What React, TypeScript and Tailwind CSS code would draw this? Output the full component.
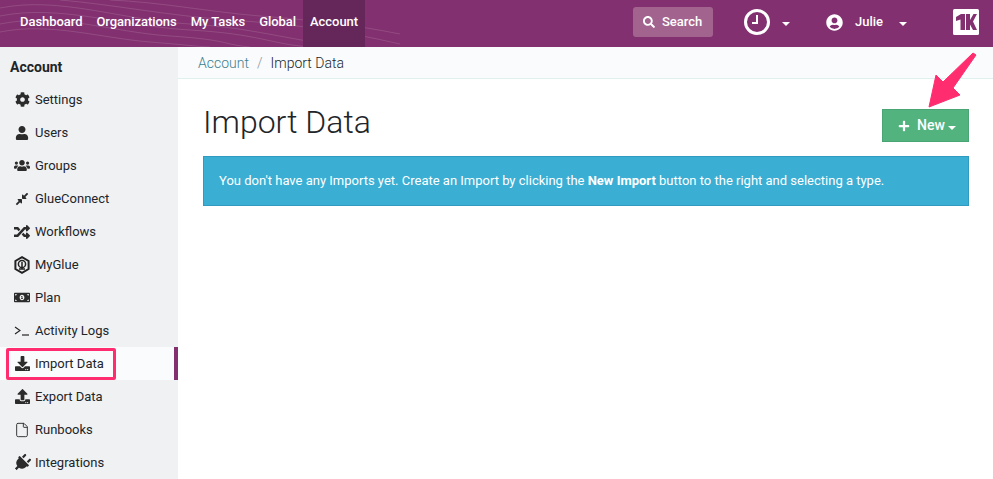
import type { ReactNode } from "react";
import {
  FaCog,
  FaUser,
  FaUsers,
  FaCompressAlt,
  FaRandom,
  FaMoneyBillAlt,
  FaDownload,
  FaUpload,
  FaPlug,
  FaSearch,
  FaPlus,
  FaUserCircle,
} from "react-icons/fa";
import { File } from "lucide-react";

function MyGlueIcon() {
  return (
    <svg viewBox="0 0 16 18" className="w-[16px] h-[18px]">
      <path d="M8 1.2 14.6 5v8L8 16.8 1.4 13V5z" fill="none" stroke="#222" strokeWidth="2" />
      <circle cx="8" cy="8" r="3.6" fill="none" stroke="#222" strokeWidth="1.5" />
      <path d="M8 6v7M5 13h6" stroke="#222" strokeWidth="1.5" />
    </svg>
  );
}

function TerminalIcon() {
  return (
    <svg viewBox="0 0 16 10" className="w-[16px] h-[10px]">
      <path d="M1 1l5 3.5L1 8" fill="none" stroke="#222" strokeWidth="1.1" />
      <path d="M8 9h7" stroke="#222" strokeWidth="1.2" />
    </svg>
  );
}

function Caret() {
  return <span className="inline-block w-0 h-0 border-x-[4px] border-x-transparent border-t-[4px] border-t-current" />;
}

const sideItems: { label: string; icon: ReactNode; active?: boolean }[] = [
  { label: "Settings", icon: <FaCog size={15} /> },
  { label: "Users", icon: <FaUser size={14} /> },
  { label: "Groups", icon: <FaUsers size={19} /> },
  { label: "GlueConnect", icon: <FaCompressAlt size={14} /> },
  { label: "Workflows", icon: <FaRandom size={16} /> },
  { label: "MyGlue", icon: <MyGlueIcon /> },
  { label: "Plan", icon: <FaMoneyBillAlt size={17} /> },
  { label: "Activity Logs", icon: <TerminalIcon /> },
  { label: "Import Data", icon: <FaDownload size={15} />, active: true },
  { label: "Export Data", icon: <FaUpload size={15} /> },
  { label: "Runbooks", icon: <File size={16} strokeWidth={1.4} /> },
  { label: "Integrations", icon: <FaPlug size={18} className="rotate-45" /> },
];

const navItems = ["Dashboard", "Organizations", "My Tasks", "Global", "Account"];

export default function App() {
  return (
    <div className="h-[479px] w-[993px] overflow-hidden flex flex-col bg-white text-[#212529] font-['Roboto',sans-serif]">
      {/* Top bar */}
      <header className="relative h-[47px] shrink-0 bg-[#82306f] flex items-center text-white text-[13px] font-medium">
        <svg viewBox="0 0 400 47" className="absolute left-0 top-0 w-[400px] h-[47px]" fill="none" stroke="#fff" strokeOpacity="0.13">
          <path d="M0 8C60 -4 120 20 190 24S300 44 360 47" />
          <path d="M0 16C60 4 120 26 190 30S270 44 310 47" />
          <path d="M0 24C60 12 110 32 170 36S220 44 250 47" />
          <path d="M0 32C50 22 100 38 150 42S190 46 210 47" />
          <path d="M60 0C110 4 170 16 230 20S340 30 400 44" />
          <path d="M110 0C160 2 210 12 260 16S350 24 400 34" />
        </svg>
        <nav className="relative flex h-full pl-[13px] tracking-[-0.05px]">
          {navItems.map((item) => (
            <a
              key={item}
              className={`flex items-center px-[7px] pb-[4px] ${item === "Account" ? "bg-[#65275a]" : ""}`}
            >
              {item}
            </a>
          ))}
        </nav>
        <div className="relative ml-auto flex items-center h-full pb-[3px]">
          <button className="flex items-center gap-[7px] w-[80px] h-[30px] pl-[10px] rounded-[3px] bg-[#a2648f] text-[13px] font-medium text-white">
            <FaSearch size={12} />
            Search
          </button>
          <span className="ml-[31px] w-[26px] h-[26px] rounded-full border-[3px] border-white relative">
            <span className="absolute left-[9px] top-[3px] w-[2px] h-[8px] bg-white" />
            <span className="absolute left-[5px] top-[10px] w-[6px] h-[2px] bg-white" />
          </span>
          <span className="ml-[12px]">
            <Caret />
          </span>
          <span className="ml-[36px]">
            <FaUserCircle size={17} />
          </span>
          <span className="ml-[12px] text-[13px]">Julie</span>
          <span className="ml-[16px]">
            <Caret />
          </span>
          <svg viewBox="0 0 26 26" className="ml-[46px] mr-[14px] w-[26px] h-[26px]">
            <rect width="26" height="26" rx="1.5" fill="#fff" />
            <path
              d="M3 8 8 5h4v16H7.5V10.5L3 12zM13 5h4v6l3.5-6H24l-4 7.5L24 21h-4l-3-5.5V21h-4z"
              fill="#82306f"
            />
          </svg>
        </div>
      </header>

      <div className="flex flex-1 min-h-0">
        {/* Sidebar */}
        <aside className="w-[178px] shrink-0 bg-[#f0f1f3] text-[13px]">
          <h2 className="h-[36px] pt-[12px] pl-[10px] text-[14px] leading-[16px] font-bold text-[#212529]">Account</h2>
          <ul>
            {sideItems.map((item) => (
              <li
                key={item.label}
                className={`relative h-[33px] flex items-center ${item.active ? "bg-[#fafbfd] border-r-[4px] border-[#82306f]" : ""}`}
              >
                <span className="w-[16px] ml-[14px] flex justify-center text-[#2b2b2b]">{item.icon}</span>
                <span className="ml-[5px]">{item.label}</span>
                {item.active && (
                  <span className="absolute left-[6px] top-[1px] w-[110px] h-[32px] border-[3px] border-[#ff2d6f] rounded-[2px]" />
                )}
              </li>
            ))}
          </ul>
        </aside>

        {/* Main */}
        <main className="relative flex-1 min-w-0">
          <div className="h-[32px] bg-[#f9fbfd] border-b border-[#dff0f0] flex items-center pl-[20px] pt-[2px] text-[14px] font-light">
            <span className="text-[#3f7f8f]">Account</span>
            <span className="mx-[8px] text-[#8a949b]">/</span>
            <span>Import Data</span>
          </div>
          <div className="pl-[25px] pr-[24px]">
            <div className="flex items-start justify-between h-[77px]">
              <h1 className="mt-[23px] text-[32px] leading-[40px] font-light">Import Data</h1>
              <button className="mt-[30px] w-[87px] h-[33px] flex items-center justify-center gap-[7px] pl-[3px] bg-[#52b37f] border border-[#4aa574] text-white text-[14px] font-medium">
                <FaPlus size={12} />
                New
                <span className="-ml-[4px]">
                  <Caret />
                </span>
              </button>
            </div>
            <div className="h-[50px] flex items-center pl-[15px] bg-[#3aaed3] border border-[#2f9bc0] text-white text-[13px]">
              <span>
                You don't have any Imports yet. Create an Import by clicking the <b className="font-bold">New Import</b> button to the right and selecting a type.
              </span>
            </div>
          </div>
          {/* Annotation arrow */}
          <svg viewBox="0 0 50 60" className="absolute left-[750px] top-[5px] w-[50px] h-[60px]">
            <path d="M1 55 8 23 15 30 45 1 48 3 25 36 32 43Z" fill="#ff2d6f" stroke="#ff2d6f" strokeLinejoin="round" strokeWidth="1" />
          </svg>
        </main>
      </div>
    </div>
  );
}
